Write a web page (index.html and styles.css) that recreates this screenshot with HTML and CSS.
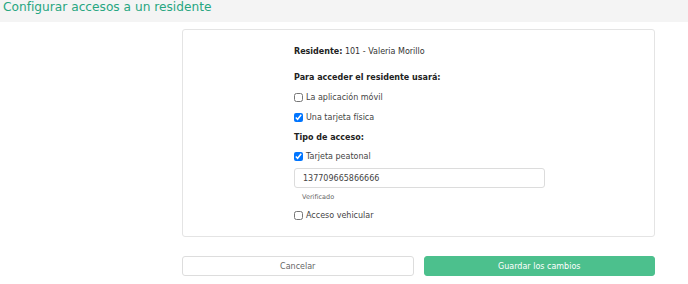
FILE: index.html
```html
<!DOCTYPE html>
<html lang="es">
<head>
    <meta charset="UTF-8">
    <meta name="viewport" content="width=device-width, initial-scale=1.0">
    <title>Configurar accesos</title>
    <link rel="stylesheet" href="styles.css">
</head>
<body>
    <div class="page-header">
        <h1>Configurar accesos a un residente</h1>
    </div>

    <div class="content">
        <div class="access-card">
            <div class="form-body">
                <p class="row resident"><strong>Residente:</strong>&nbsp;101 - Valeria Morillo</p>

                <h3 class="row section-title first">Para acceder el residente usará:</h3>
                <label class="row check-row"><input type="checkbox"> La aplicación móvil</label>
                <label class="row check-row"><input type="checkbox" checked> Una tarjeta física</label>

                <h3 class="row section-title">Tipo de acceso:</h3>
                <label class="row check-row tight"><input type="checkbox" checked> Tarjeta peatonal</label>
                <input class="card-input" type="text" value="137709665866666">
                <span class="hint">Verificado</span>
                <label class="row check-row tight"><input type="checkbox"> Acceso vehicular</label>
            </div>
        </div>

        <div class="actions">
            <button class="btn btn-cancel">Cancelar</button>
            <button class="btn btn-save">Guardar los cambios</button>
        </div>
    </div>
</body>
</html>
```

FILE: styles.css
```css
/* Reset */
* {
    margin: 0;
    padding: 0;
    box-sizing: border-box;
    font-family: 'DejaVu Sans', 'Noto Sans', sans-serif;
}

body {
    background: #fff;
    color: #333;
    font-size: 8px;
}

/* Header */
.page-header {
    background: #f4f4f4;
    height: 22px;
    padding-left: 3px;
}

.page-header h1 {
    font-size: 12.2px;
    font-weight: 400;
    color: #27a681;
    line-height: 15px;
}

/* Card */
.content {
    padding: 7px 33px 0 182px;
}

.access-card {
    border: 1px solid #e4e4e4;
    border-radius: 3px;
    padding: 14px 0 14px 111px;
}

.form-body {
    display: flex;
    flex-direction: column;
    align-items: flex-start;
}

.row {
    display: flex;
    align-items: center;
    height: 14px;
}

.resident strong,
.section-title {
    font-weight: 700;
    color: #222;
}

.section-title {
    font-size: 8px;
    margin-top: 6px;
}

.section-title.first {
    margin-top: 12px;
}

.check-row {
    margin-top: 6px;
    color: #444;
}

.check-row.tight {
    margin-top: 5px;
}

.check-row input {
    width: 9px;
    height: 9px;
    margin-right: 3px;
}

.card-input {
    width: 251px;
    height: 20px;
    margin-top: 5px;
    border: 1px solid #dcdcdc;
    border-radius: 3px;
    padding: 0 8px;
    font-size: 8px;
    color: #444;
}

.hint {
    display: flex;
    align-items: center;
    height: 12px;
    font-size: 6.5px;
    color: #666;
    margin: 3px 0 0 8px;
}

/* Buttons */
.actions {
    display: flex;
    gap: 10px;
    margin-top: 19px;
}

.btn {
    flex: 1;
    height: 20px;
    border-radius: 3px;
    font-size: 8px;
    cursor: pointer;
}

.btn-cancel {
    background: #fff;
    border: 1px solid #ddd;
    color: #666;
}

.btn-save {
    background: #4cc08d;
    border: 1px solid #4cc08d;
    color: #fff;
}
```
